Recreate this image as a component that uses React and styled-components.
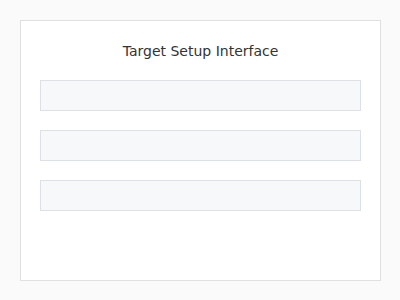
import React from "react";
import styled, { createGlobalStyle } from "styled-components";

const GlobalStyle = createGlobalStyle`
  html, body {
    margin: 0;
    padding: 0;
    background: #fafafa;
  }
  body {
    font-family: "DejaVu Sans", sans-serif;
  }
`;

const Page = styled.main`
  width: 400px;
  height: 300px;
  padding: 20px;
  box-sizing: border-box;
`;

const Card = styled.section`
  width: 361px;
  height: 261px;
  box-sizing: border-box;
  background: #ffffff;
  border: 1px solid #e0e0e0;
  padding: 20px 19px 0;
  display: flex;
  flex-direction: column;
`;

const Title = styled.h1`
  margin: 0;
  height: 39px;
  line-height: 20px;
  font-size: 14px;
  font-weight: 400;
  color: #333333;
  text-align: center;
`;

const Fields = styled.div`
  display: flex;
  flex-direction: column;
  gap: 19px;
`;

const Field = styled.div`
  height: 31px;
  box-sizing: border-box;
  background: #f7f8fa;
  border: 1px solid #dde1e6;
`;

const App = () => {
  const fields = ["name", "type", "target"];
  return (
    <>
      <GlobalStyle />
      <Page>
        <Card>
          <Title>Target Setup Interface</Title>
          <Fields>
            {fields.map((f) => (
              <Field key={f} />
            ))}
          </Fields>
        </Card>
      </Page>
    </>
  );
};

export default App;
